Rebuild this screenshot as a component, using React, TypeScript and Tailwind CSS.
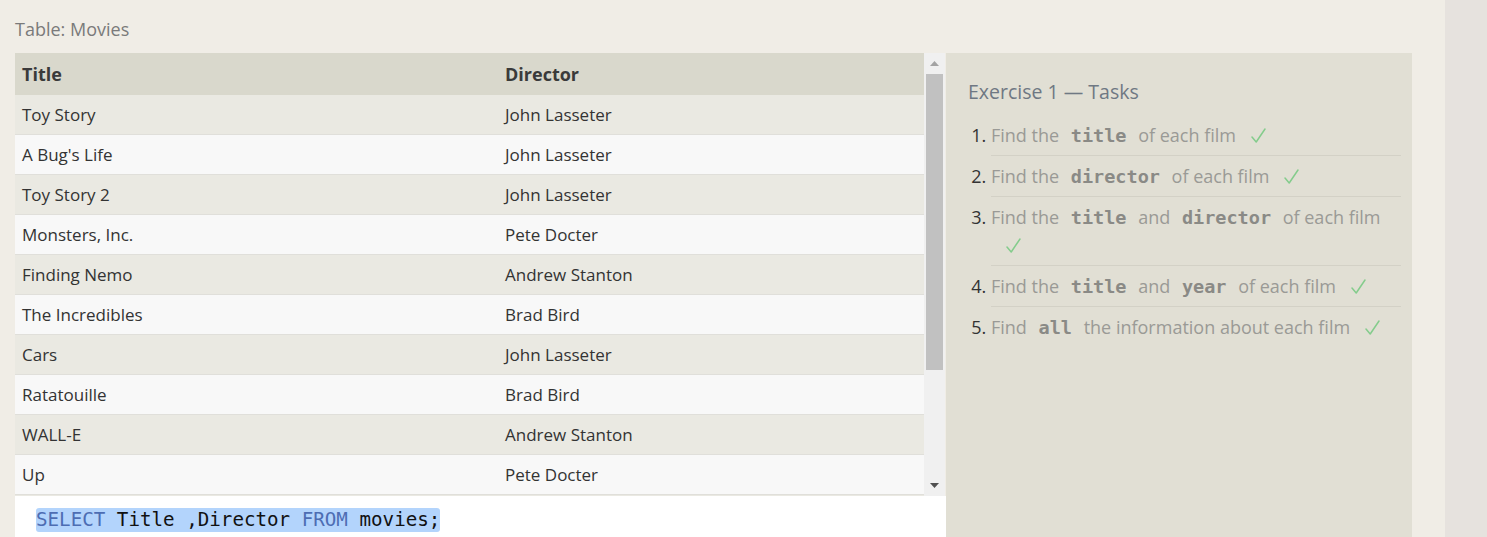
import React from "react";

const rows: [string, string][] = [
  ["Toy Story", "John Lasseter"],
  ["A Bug's Life", "John Lasseter"],
  ["Toy Story 2", "John Lasseter"],
  ["Monsters, Inc.", "Pete Docter"],
  ["Finding Nemo", "Andrew Stanton"],
  ["The Incredibles", "Brad Bird"],
  ["Cars", "John Lasseter"],
  ["Ratatouille", "Brad Bird"],
  ["WALL-E", "Andrew Stanton"],
  ["Up", "Pete Docter"],
];

function Check() {
  return (
    <svg width="15" height="15" viewBox="0 0 15 15" className="inline-block ml-[15px] align-[-1px]">
      <path d="M1 9 L5.2 14 L14 1" fill="none" stroke="#84cc8c" strokeWidth="1.5" strokeLinecap="round" strokeLinejoin="round" />
    </svg>
  );
}

function C({ children }: { children: React.ReactNode }) {
  return (
    <code className="px-[7px] font-bold text-[#8a8a86] text-[18.5px] leading-[0]" style={{ fontFamily: '"DejaVu Sans Mono", monospace' }}>
      {children}
    </code>
  );
}

export default function App() {
  return (
    <div className="flex h-[537px] w-full overflow-hidden bg-[#f0ede6]" style={{ fontFamily: '"Open Sans", sans-serif' }}>
      <div className="w-[1445px] shrink-0 pl-[15px]">
        <div className="pt-[17px] mb-[12px] text-[18px] leading-[24px] text-[#7a7a7a]">Table: Movies</div>
        <div className="flex">
          <div className="w-[931px] shrink-0 flex flex-col">
            <div className="flex h-[443px] overflow-hidden">
              <div className="w-[909px] shrink-0 overflow-hidden">
                <div className="flex h-[42px] items-center bg-[#d9d8cc] text-[18px] font-bold text-[#3a3a3a]">
                  <div className="w-[483px] px-[7px]">Title</div>
                  <div className="px-[7px]">Director</div>
                </div>
                {rows.map((r, i) => (
                  <div
                    key={i}
                    className={
                      "flex h-[40px] items-center border-b border-[#e0dfda] text-[17px] text-[#333333] " +
                      (i % 2 === 0 ? "bg-[#eae9e2]" : "bg-[#f8f8f8]")
                    }
                  >
                    <div className="w-[483px] px-[7px]">{r[0]}</div>
                    <div className="px-[7px]">{r[1]}</div>
                  </div>
                ))}
                <div className="h-[40px] bg-[#eae9e2]" />
              </div>
              <div className="w-[21px] shrink-0 bg-[#f0f0f0] flex flex-col items-center">
                <div className="h-[21px] flex items-center justify-center">
                  <svg width="9" height="5" viewBox="0 0 9 5"><path d="M4.5 0 L9 5 L0 5 Z" fill="#a3a3a3" /></svg>
                </div>
                <div className="w-[17px] h-[296px] bg-[#c1c1c1]" />
                <div className="flex-1" />
                <div className="h-[21px] flex items-center justify-center">
                  <svg width="9" height="5" viewBox="0 0 9 5"><path d="M0 0 L9 0 L4.5 5 Z" fill="#505050" /></svg>
                </div>
              </div>
            </div>
            <div className="h-[41px] bg-white pl-[21px] pt-[12px]">
              <span
                className="inline-block bg-[#b3d4fc] rounded-[3px] leading-[24px] text-[19.2px] text-[#111111]"
                style={{ fontFamily: '"DejaVu Sans Mono", monospace' }}
              >
                <span className="text-[#4d6db3]">SELECT</span> Title ,Director <span className="text-[#4d6db3]">FROM</span> movies;
              </span>
            </div>
          </div>
          <div className="w-[466px] shrink-0 h-[500px] bg-[#e1dfd4] pl-[22px] pr-[11px] pt-[25px]">
            <div className="text-[19.5px] leading-[28px] text-[#6f7883] mb-[9px]">Exercise 1 — Tasks</div>
            <ol className="list-decimal pl-[23px] text-[18px] leading-[28px] text-[#9a9a96] marker:text-[#333333]">
              <li className="py-[6px] border-b border-[#d3d1c6]">
                Find the <C>title</C> of each film<Check />
              </li>
              <li className="py-[6px] border-b border-[#d3d1c6]">
                Find the <C>director</C> of each film<Check />
              </li>
              <li className="py-[6px] border-b border-[#d3d1c6]">
                Find the <C>title</C> and <C>director</C> of each film
                <br />
                <Check />
              </li>
              <li className="py-[6px] border-b border-[#d3d1c6]">
                Find the <C>title</C> and <C>year</C> of each film<Check />
              </li>
              <li className="py-[6px]">
                Find <C>all</C> the information about each film<Check />
              </li>
            </ol>
          </div>
        </div>
      </div>
      <div className="flex-1 bg-[#e6e2de]" />
    </div>
  );
}
